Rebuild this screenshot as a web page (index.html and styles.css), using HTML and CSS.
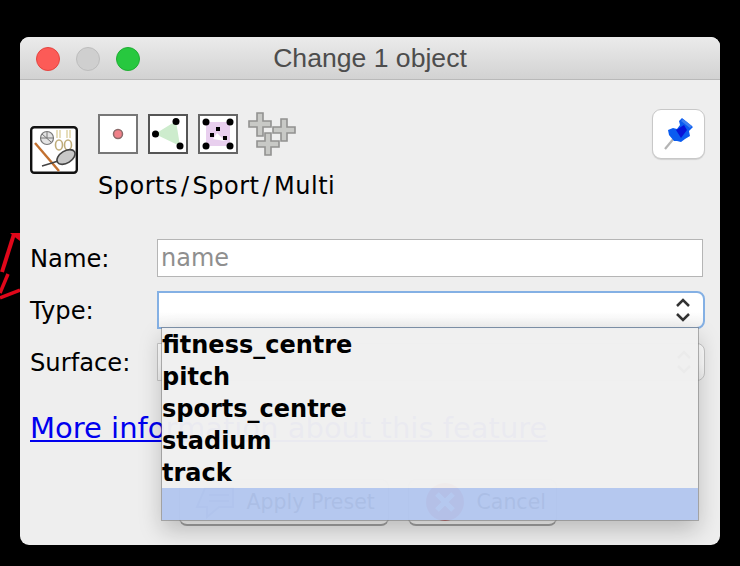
FILE: index.html
```html
<!DOCTYPE html>
<html lang="en">
<head>
<meta charset="utf-8">
<title>Change 1 object</title>
<link rel="stylesheet" href="styles.css">
</head>
<body>
<svg class="desk-arrow" viewBox="0 0 20 72" width="20" height="72" aria-hidden="true">
  <g fill="none" stroke="#e0071a" stroke-width="4">
    <path d="M2 44 14 6"/>
    <path d="M0 65 8 46" stroke-width="3.500"/>
    <path d="M0 70 20 62" stroke-width="3.500"/>
  </g>
  <path d="M10 5H20V13L16 10Z" fill="#e0071a"/>
</svg>
<main class="window">
  <header class="titlebar">
    <div class="lights">
      <span class="light light-close"></span>
      <span class="light light-min"></span>
      <span class="light light-max"></span>
    </div>
    <h1 class="title">Change 1 object</h1>
  </header>
  <div class="content">
    <section class="head">
      <svg class="preset-icon" viewBox="0 0 48 48" width="48" height="48" aria-hidden="true">
        <rect x="1.200" y="1.200" width="45.600" height="45.600" rx="3" fill="#fff" stroke="#111" stroke-width="2.400"/>
        <path d="M5 17 29 45" stroke="#c2702f" stroke-width="2.400" fill="none"/>
        <circle cx="17" cy="12" r="6.500" fill="#e4e4e4" stroke="#777" stroke-width="1.200"/>
        <path d="M11 12H23M17 6V12M12 8 21 16" stroke="#777" fill="none"/>
        <path d="M27 4V12M30 4V12M37 4V12M40 4V12" stroke="#ddd0a0" stroke-width="1.400"/>
        <ellipse cx="29" cy="19" rx="3.500" ry="5" fill="none" stroke="#bfac78" stroke-width="1.600"/>
        <ellipse cx="38" cy="19" rx="3.500" ry="5" fill="none" stroke="#bfac78" stroke-width="1.600"/>
        <ellipse cx="36" cy="31" rx="10" ry="6" transform="rotate(-32 36 31)" fill="#c8c8c8" stroke="#444" stroke-width="1.600"/>
        <path d="M12 40 22 37 28 35" stroke="#444" stroke-width="1.600" fill="none"/>
      </svg>
      <div class="head-main">
        <div class="type-icons">
          <svg class="type-box" viewBox="0 0 40 40" width="40" height="40" aria-hidden="true">
            <rect x="1" y="1" width="38" height="38" fill="#fff" stroke="#777" stroke-width="2"/>
            <circle cx="20" cy="20" r="4.500" fill="#f08088" stroke="#8a6a6a" stroke-width="1.500"/>
          </svg>
          <svg class="type-box" viewBox="0 0 40 40" width="40" height="40" aria-hidden="true">
            <rect x="1" y="1" width="38" height="38" fill="#fff" stroke="#555" stroke-width="2"/>
            <path d="M7 20 28 7 32 32Z" fill="#cdeccd"/>
            <circle cx="28" cy="7.500" r="3.500" fill="#000"/>
            <circle cx="7.500" cy="20" r="3.500" fill="#000"/>
            <circle cx="32" cy="32" r="3.500" fill="#000"/>
          </svg>
          <svg class="type-box" viewBox="0 0 40 40" width="40" height="40" aria-hidden="true">
            <rect x="1" y="1" width="38" height="38" fill="#fff" stroke="#666" stroke-width="2"/>
            <path d="M8 8H32V32H8ZM19 19 15 25 27 27Z" fill="#e8cfee" fill-rule="evenodd"/>
            <circle cx="8" cy="8" r="3.500" fill="#000"/>
            <circle cx="32" cy="8" r="3.500" fill="#000"/>
            <circle cx="8" cy="32" r="3.500" fill="#000"/>
            <circle cx="32" cy="32" r="3.500" fill="#000"/>
            <rect x="18" y="13" width="4" height="4" fill="#000"/>
            <rect x="12" y="19" width="4" height="4" fill="#000"/>
            <rect x="25" y="22" width="4" height="4" fill="#000"/>
          </svg>
          <svg class="type-rel" viewBox="0 0 48 44" width="48" height="44" aria-hidden="true">
            <g fill="#c8c9c6" stroke="#919190" stroke-width="1.600">
              <path d="M9 1H15V9H23V15H15V24H9V15H1V9H9Z"/>
              <path d="M33 7H39V15H47V21H39V29H33V21H25V15H33Z"/>
              <path d="M17 21H23V29H31V35H23V43H17V35H9V29H17Z"/>
            </g>
          </svg>
        </div>
        <p class="preset-name">Sports<span class="sep">/</span>Sport<span class="sep">/</span>Multi</p>
      </div>
      <button class="pin" type="button" aria-label="Pin">
        <svg viewBox="0 0 32 34" width="32" height="34" aria-hidden="true">
          <path d="M2 32 12 20" stroke="#b4b4b4" stroke-width="2.200" fill="none"/>
          <path d="M19 1 30 10 26 14 27 19 22 22 18 25 14 24 11 24 6 18 5 13 10 11 14 12 17 8 16 4Z" fill="#0a5cf0"/>
          <path d="M13 13 21 8 24 13 18 21Z" fill="#0714d8"/>
          <path d="M20 2 29 9 27 11 18 4Z" fill="#3d7ff0"/>
        </svg>
      </button>
    </section>
    <form class="form">
      <label class="field-label" for="name">Name:</label>
      <div class="text-field" id="name">name</div>
      <label class="field-label">Type:</label>
      <div class="combo combo-focus">
        <span class="combo-value"></span>
        <span class="combo-arrows">
          <svg viewBox="0 0 16 26" width="16" height="26" aria-hidden="true"><path d="M2 9 8 3 14 9M2 17 8 23 14 17" fill="none" stroke="#333" stroke-width="2.500"/></svg>
        </span>
      </div>
      <label class="field-label">Surface:</label>
      <div class="combo">
        <span class="combo-value"></span>
        <span class="combo-arrows">
          <svg viewBox="0 0 16 26" width="16" height="26" aria-hidden="true"><path d="M2 9 8 3 14 9M2 17 8 23 14 17" fill="none" stroke="#333" stroke-width="2.500"/></svg>
        </span>
      </div>
    </form>
    <p class="more"><a href="#">More information about this feature</a></p>
    <div class="actions">
      <button class="action action-apply" type="button">
        <svg viewBox="0 0 40 34" width="40" height="34" aria-hidden="true"><path d="M10 3H38V22H24L12 32V22H2Z" fill="#dfe6f4" stroke="#8fa0c0" stroke-width="2"/><path d="M14 10H34M14 16H34" stroke="#8fa0c0" stroke-width="2"/></svg>
        <span>Apply Preset</span>
      </button>
      <button class="action action-cancel" type="button">
        <svg viewBox="0 0 40 40" width="40" height="40" aria-hidden="true"><circle cx="20" cy="20" r="19" fill="#d84040"/><path d="M12 12 28 28M28 12 12 28" stroke="#fff" stroke-width="5"/></svg>
        <span>Cancel</span>
      </button>
    </div>
  </div>
  <ul class="popup">
    <li class="popup-item">fitness_centre</li>
    <li class="popup-item">pitch</li>
    <li class="popup-item">sports_centre</li>
    <li class="popup-item">stadium</li>
    <li class="popup-item">track</li>
    <li class="popup-item popup-selected">&nbsp;</li>
  </ul>
</main>
</body>
</html>
```
FILE: styles.css
```css
* { box-sizing: border-box; }
html, body { margin: 0; height: 100%; background: #000; }
body { width: 740px; height: 566px; overflow: hidden; position: relative; padding: 37px 20px 21px; font-family: "DejaVu Sans", sans-serif; color: #000; }
.desk-arrow { position: absolute; left: 0; top: 228px; }
.window { position: relative; width: 700px; height: 508px; background: #eeeeee; border-radius: 9px; overflow: hidden; }
.titlebar { height: 43px; position: relative; display: flex; align-items: center; justify-content: center; background: linear-gradient(#ebebeb, #d2d2d2); border-bottom: 1px solid #b9b9b9; }
.lights { position: absolute; left: 16px; top: 10px; display: flex; gap: 16px; }
.light { width: 24px; height: 24px; border-radius: 50%; }
.light-close { background: #fc5b57; border: 1px solid #e5443f; }
.light-min { background: #cfcfcf; border: 1px solid #bdbdbd; }
.light-max { background: #27c83f; border: 1px solid #1fae33; }
.title { margin: 0; font: 400 26.6px "Liberation Sans", sans-serif; color: #4d4d4d; }
.content { padding: 29px 15px 0 10px; }
.head { display: flex; align-items: flex-start; height: 130px; }
.preset-icon { margin-top: 17px; flex: none; }
.head-main { margin-left: 20px; flex: 1; padding-top: 3px; }
.type-icons { display: flex; align-items: flex-start; gap: 10px; height: 45px; }
.type-box { margin-top: 2px; }
.preset-name { margin: 13px 0 0; font-size: 24px; line-height: 32px; letter-spacing: .5px; }
.sep { margin: 0 3px; }
.pin { width: 53px; height: 50px; padding: 0; display: flex; align-items: center; justify-content: center; background: #fff; border: 1px solid #c8c8c8; border-radius: 9px; box-shadow: 0 1px 1px rgba(0,0,0,.12); }
.form { display: grid; grid-template-columns: 127px 1fr; grid-auto-rows: 38px; row-gap: 14px; align-items: stretch; }
.field-label { font-size: 24.2px; line-height: 40px; }
.text-field { margin-right: 2px; background: #fff; border: 1px solid #b5b5b5; padding-left: 3px; font-size: 24px; line-height: 37px; color: #8f8f8f; }
.combo { display: flex; background: linear-gradient(#fff 55%, #f1f1f1); border: 1px solid #c6c6c6; border-radius: 0 8px 8px 0; }
.combo-focus { border: 2px solid #84b0e4; }
.combo-value { flex: 1; }
.combo-arrows { width: 40px; display: flex; align-items: center; justify-content: center; }
.more { margin: 29px 0 0; font-size: 29px; line-height: 36px; }
.more a { color: #0000ee; }
.actions { display: flex; justify-content: center; gap: 19px; margin-top: 33px; }
.action { height: 47px; display: flex; align-items: center; background: #f6f6f6; border: 1px solid #bcbcbc; border-bottom: 2px solid #a0a0a0; border-radius: 8px; font: 400 20.500px "DejaVu Sans", sans-serif; white-space: nowrap; color: #000; }
.action-apply { width: 210px; padding: 0 0 0 15px; gap: 12px; }
.action-cancel { width: 149px; padding: 0 0 0 16px; gap: 12px; }
.popup { position: absolute; left: 142px; top: 291px; width: 536px; margin: 0; padding: 0; list-style: none; box-shadow: 0 0 0 1px rgba(120,120,120,.55), 0 10px 22px rgba(0,0,0,.22); }
.popup-item { height: 32px; background: rgba(240,240,240,.975); font-size: 24px; font-weight: 700; line-height: 34px; color: #000; }
.popup-selected { background: rgba(178,198,238,.96); }
```
